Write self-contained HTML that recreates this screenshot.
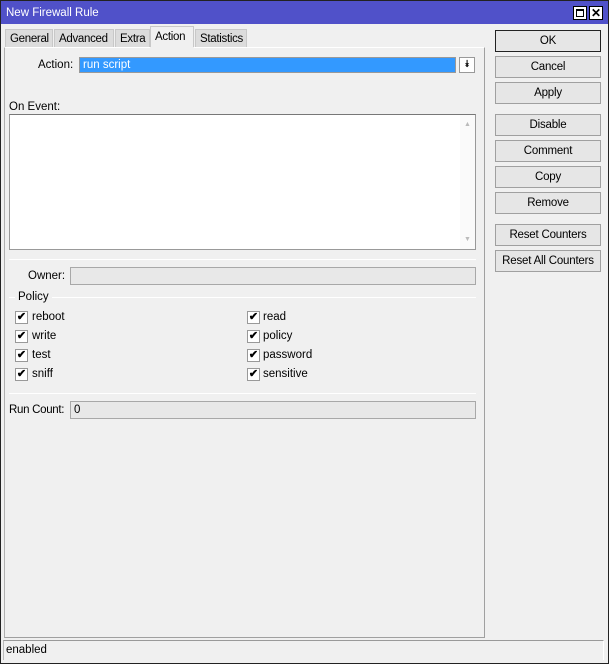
<!DOCTYPE html><html><head><style>
*{box-sizing:border-box;margin:0;padding:0}
body{width:609px;height:664px;background:#f0f0f0;font-family:"Liberation Sans",Arial,sans-serif;font-size:11.5px;color:#000;position:relative;overflow:hidden}
.a{position:absolute;white-space:nowrap}
.win{left:0;top:0;width:609px;height:664px;border:1px solid #222}
.title{left:1px;top:1px;width:607px;height:23px;background:#5051c9;color:#fff;padding:6px 0 0 5px}
.tb{width:14px;height:14px;border:1px solid #000;background:#fff;top:6px}
.tab{top:29px;height:19px;border:1px solid #c8c8c8;border-bottom:none;background:#dcdcdc;padding:3px 0 0 4px;letter-spacing:-0.3px}
.btn{left:495px;width:106px;height:22px;border:1px solid #a0a0a0;background:#e6e6e6;text-align:center;line-height:20px;letter-spacing:-0.2px}
.fld{border:1px solid #a8a8a8;background:#e8e8e8;height:18px}
.cb{width:13px;height:13px;border:1px solid #999;background:#fff;font-size:11px;line-height:11px;text-align:center;font-weight:bold}
.hl{height:1px;background:#b4b4b4;border-bottom:1px solid #fff}
</style></head><body>
<div class="a win"></div>
<div class="a title">New Firewall Rule</div>
<div class="a tb" style="left:573px"><div style="position:absolute;left:2px;top:2px;width:8px;height:8px;border:1px solid #000;border-top-width:2px"></div></div>
<div class="a tb" style="left:589px;font-weight:bold;font-size:12px;line-height:12px;text-align:center">✕</div>
<div class="a tab" style="left:5px;width:48px">General</div>
<div class="a tab" style="left:54px;width:60px">Advanced</div>
<div class="a tab" style="left:115px;width:35px">Extra</div>
<div class="a tab" style="left:150px;width:44px;top:26px;height:22px;background:#f0f0f0;padding-top:4px">Action</div>
<div class="a tab" style="left:195px;width:52px">Statistics</div>
<div class="a" style="left:4px;top:47px;width:481px;height:591px;border-left:1px solid #b0b0b0;border-right:1px solid #a0a0a0;border-bottom:1px solid #a0a0a0;border-top:1px solid #fff"></div>
<div class="a" style="left:150px;top:47px;width:44px;height:2px;background:#f0f0f0"></div>
<div class="a" style="left:38px;top:59px">Action:</div>
<div class="a" style="left:79px;top:57px;width:377px;height:16px;border:1px solid #999;background:#3399ff;color:#fff;padding:1px 0 0 3px;line-height:13px">run script</div>
<div class="a" style="left:459px;top:57px;width:16px;height:16px;border:1px solid #999;background:#fff;font-size:10px;text-align:center;line-height:13px">⯯</div>
<div class="a" style="left:9px;top:101px">On Event:</div>
<div class="a" style="left:9px;top:114px;width:467px;height:136px;border:1px solid #999;border-top-color:#777;background:#fff"></div>
<div class="a" style="left:460px;top:115px;width:15px;height:134px;background:#fafafa;color:#bbb;font-size:7px;text-align:center;padding-top:6px">▲<div style="position:absolute;bottom:6px;width:15px">▼</div></div>
<div class="a hl" style="left:9px;top:259px;width:467px"></div>
<div class="a" style="left:28px;top:270px">Owner:</div>
<div class="a fld" style="left:70px;top:267px;width:406px"></div>
<div class="a hl" style="left:9px;top:297px;width:467px"></div>
<div class="a" style="left:15px;top:291px;background:#f0f0f0;padding:0 3px">Policy</div>
<div class="a cb" style="left:15px;top:311px">✔</div><div class="a" style="left:32px;top:311px">reboot</div>
<div class="a cb" style="left:15px;top:330px">✔</div><div class="a" style="left:32px;top:330px">write</div>
<div class="a cb" style="left:15px;top:349px">✔</div><div class="a" style="left:32px;top:349px">test</div>
<div class="a cb" style="left:15px;top:368px">✔</div><div class="a" style="left:32px;top:368px">sniff</div>
<div class="a cb" style="left:247px;top:311px">✔</div><div class="a" style="left:263px;top:311px">read</div>
<div class="a cb" style="left:247px;top:330px">✔</div><div class="a" style="left:263px;top:330px">policy</div>
<div class="a cb" style="left:247px;top:349px">✔</div><div class="a" style="left:263px;top:349px">password</div>
<div class="a cb" style="left:247px;top:368px">✔</div><div class="a" style="left:263px;top:368px">sensitive</div>
<div class="a hl" style="left:9px;top:393px;width:467px"></div>
<div class="a" style="left:9px;top:404px;letter-spacing:-0.3px">Run Count:</div>
<div class="a fld" style="left:70px;top:401px;width:406px;padding:2px 0 0 3px">0</div>
<div class="a btn" style="top:30px;border:1px solid #222">OK</div>
<div class="a btn" style="top:56px">Cancel</div>
<div class="a btn" style="top:82px">Apply</div>
<div class="a btn" style="top:114px">Disable</div>
<div class="a btn" style="top:140px">Comment</div>
<div class="a btn" style="top:166px">Copy</div>
<div class="a btn" style="top:192px">Remove</div>
<div class="a btn" style="top:224px">Reset Counters</div>
<div class="a btn" style="top:250px">Reset All Counters</div>
<div class="a" style="left:3px;top:640px;width:601px;height:20px;border-top:1px solid #999;border-left:1px solid #bbb;border-right:1px solid #fff;padding:3px 0 0 2px">enabled</div>
</body></html>
